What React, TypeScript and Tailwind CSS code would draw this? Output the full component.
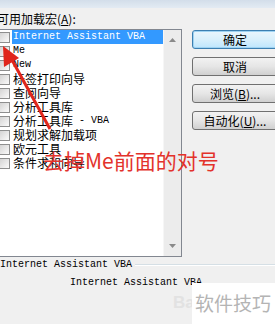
import React from "react";

const cjk = '"Noto Sans CJK SC", "Noto Sans", sans-serif';
const mono = '"Liberation Mono", "Noto Sans CJK SC", monospace';

function Check() {
  return (
    <div className="w-[10px] h-[11px] border border-[#8e8f8f] border-l-0 bg-gradient-to-br from-[#d4d4d4] to-[#fbfbfb] shrink-0" />
  );
}

type Item = { parts: { t: string; m?: boolean }[]; sel?: boolean };

const items: Item[] = [
  { parts: [{ t: "Internet Assistant VBA", m: true }], sel: true },
  { parts: [{ t: "Me", m: true }] },
  { parts: [{ t: "New", m: true }] },
  { parts: [{ t: "标签打印向导" }] },
  { parts: [{ t: "查阅向导" }] },
  { parts: [{ t: "分析工具库" }] },
  { parts: [{ t: "分析工具库" }, { t: " - VBA", m: true }] },
  { parts: [{ t: "规划求解加载项" }] },
  { parts: [{ t: "欧元工具" }] },
  { parts: [{ t: "条件求和向导" }] },
];

function Btn({ children, def }: { children: React.ReactNode; def?: boolean }) {
  return (
    <div
      className={
        "w-[86px] h-[19px] rounded-[3px] border flex items-center justify-center text-[12px] leading-[12px] text-black " +
        (def
          ? "border-[#3c7fb1] bg-gradient-to-b from-[#eaf6fd] via-[#d9f0fc] to-[#bee6fd] shadow-[inset_0_0_0_1px_#9fd3f2]"
          : "border-[#707070] bg-gradient-to-b from-[#f2f2f2] via-[#e6e6e6] to-[#d0d0d0]")
      }
      style={{ fontFamily: cjk }}
    >
      {children}
    </div>
  );
}

export default function App() {
  return (
    <div className="w-[275px] h-[324px] bg-[#f0f0f0] relative overflow-hidden">
      <div className="h-[8px] bg-gradient-to-b from-[#d3deea] to-[#e3ebf3]" />
      <div
        className="h-[21px] pt-[5px] -ml-[3px] text-[12px] leading-[12px] text-black"
        style={{ fontFamily: cjk }}
      >
        可用加载宏(<span className="underline">A</span>):
      </div>
      <div className="flex">
        <div className="-ml-[1px] w-[183px] h-[228px] border border-[#828790] bg-white flex">
          <div className="w-[163px] flex flex-col">
            {items.map((it, i) => (
              <div key={i} className="h-[14px] flex items-center">
                <Check />
                <div
                  className={
                    "ml-[2px] h-[14px] flex items-center pl-[1px] " +
                    (it.sel ? "flex-1 bg-[#3399ff] text-white" : "text-black")
                  }
                >
                  {it.parts.map((p, j) => (
                    <span
                      key={j}
                      className={p.m ? "text-[10px] leading-[14px]" : "text-[12px] leading-[14px]"}
                      style={{ fontFamily: p.m ? mono : cjk, whiteSpace: "pre" }}
                    >
                      {p.t}
                    </span>
                  ))}
                </div>
              </div>
            ))}
          </div>
          <div className="w-[18px] bg-[#ececec] border-l border-[#f6f6f6] flex flex-col justify-between items-center">
            <div className="h-[20px] flex items-center justify-center">
              <svg width="7" height="4" viewBox="0 0 7 4">
                <polygon points="3.5,0 7,4 0,4" fill="#8a8a8a" />
              </svg>
            </div>
            <div className="h-[20px] flex items-center justify-center">
              <svg width="7" height="4" viewBox="0 0 7 4">
                <polygon points="0,0 7,0 3.5,4" fill="#8a8a8a" />
              </svg>
            </div>
          </div>
        </div>
        <div className="ml-[10px] pt-[1px] flex flex-col gap-[8px]">
          <Btn def>确定</Btn>
          <Btn>取消</Btn>
          <Btn>
            浏览(<span className="underline">B</span>)...
          </Btn>
          <Btn>
            自动化(<span className="underline">U</span>)...
          </Btn>
        </div>
      </div>
      <div className="mt-[1px] h-[14px] flex items-center">
        <span className="text-[10px] leading-[14px] text-black" style={{ fontFamily: mono, whiteSpace: "pre" }}>
          Internet Assistant VBA
        </span>
        <div className="flex-1 ml-[3px] border-t border-[#d5dfe5] border-b border-b-white" />
      </div>
      <div className="mt-[4px] h-[14px] pl-[70px] flex items-center">
        <span className="text-[10px] leading-[14px] text-black" style={{ fontFamily: mono, whiteSpace: "pre" }}>
          Internet Assistant VBA
        </span>
      </div>

      {/* watermark */}
      <div
        className="absolute left-[173px] top-[294px] text-[17px] leading-[18px] font-bold text-[#e2e2e2]"
        style={{ fontFamily: '"Liberation Sans", sans-serif' }}
      >
        Ba
      </div>
      <div className="absolute left-[192px] top-[283px] w-[83px] h-[41px] bg-white">
        <div
          className="pl-[3px] pt-[10px] text-[19px] leading-[19px] text-[#b4b4b4] whitespace-nowrap"
          style={{ fontFamily: cjk }}
        >
          软件技巧
        </div>
      </div>

      {/* red annotation arrow */}
      <svg className="absolute left-0 top-0" width="275" height="324" viewBox="0 0 275 324">
        <line x1="50" y1="129" x2="12" y2="60" stroke="#e0261c" strokeWidth="3" />
        <polygon points="3,46 19,58 4,67" fill="#e0261c" />
      </svg>
      <div
        className="absolute left-[43px] top-[148px] text-[21px] leading-[24px] text-[#e3322b] whitespace-nowrap"
        style={{ fontFamily: cjk }}
      >
        去掉Me前面的对号
      </div>
    </div>
  );
}
